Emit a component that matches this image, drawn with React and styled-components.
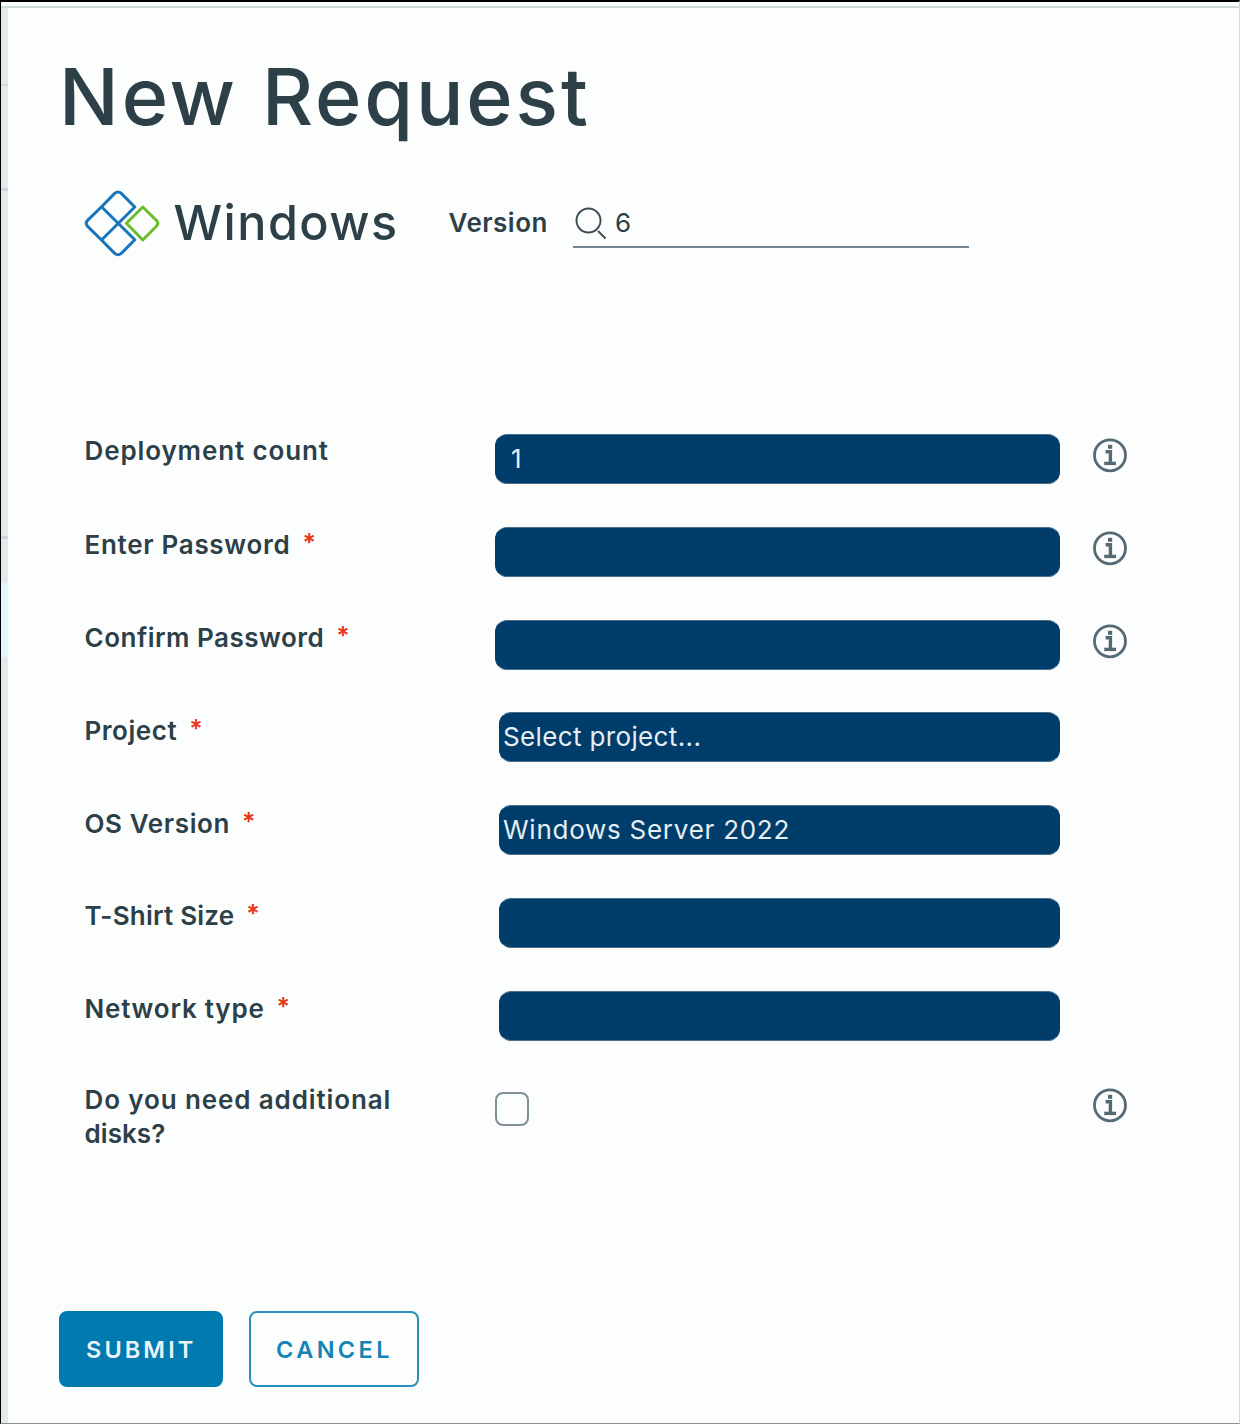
import React from "react";
import styled, { createGlobalStyle } from "styled-components";

const Global = createGlobalStyle`
  *, *::before, *::after { box-sizing: border-box; }
  body {
    margin: 0;
    background: #fcfefe;
    color: #2d4048;
    font-family: Inter, "Liberation Sans", sans-serif;
  }
`;

const Window = styled.div`
  display: flex;
  flex-direction: column;
  width: 1240px;
  height: 1424px;
  border: solid;
  border-width: 2px 1px 1px;
  border-color: #000 #d4d6d6 #8f9191 #000;
  overflow: hidden;
`;

const TopEdge = styled.div`
  flex: none;
  height: 6px;
  background: #fff;
  border-bottom: 2px solid #cfdade;
`;

const Body = styled.div`
  flex: 1;
  display: flex;
  min-height: 0;
`;

const Rail = styled.div`
  flex: none;
  width: 7px;
  display: flex;
  flex-direction: column;
  background: #e3e9ec;
`;

const RailItem = styled.div`
  flex: none;
  height: ${(p) => p.$height}px;
  background: ${(p) => (p.$active ? "#e0f5fd" : "transparent")};
  border-bottom: ${(p) => p.$line || 0}px solid #ccd5d9;
`;

const Panel = styled.main`
  flex: 1;
  padding: 46px 0 0 51px;
`;

const Title = styled.h1`
  margin: 0;
  height: 84px;
  font-size: 79px;
  font-weight: 500;
  line-height: 84px;
  letter-spacing: 2.88px;
`;

const Header = styled.header`
  display: flex;
  align-items: center;
  height: 68px;
  margin: 51px 0 0 25px;
`;

const Logo = styled.svg`
  flex: none;
  width: 76px;
  height: 68px;
  fill: none;
  stroke-width: 3;
  stroke-linejoin: round;
`;

const Product = styled.h2`
  margin: 0 0 0 13.5px;
  width: 275px;
  font-size: 48.5px;
  font-weight: 450;
  line-height: 56px;
  letter-spacing: 1.45px;
`;

const VersionLabel = styled.label`
  width: 124.5px;
  margin-top: -2px;
  font-size: 26px;
  font-weight: 600;
  letter-spacing: 0.49px;
`;

const SearchField = styled.div`
  display: flex;
  align-items: center;
  width: 396px;
  height: 50px;
  border-bottom: 2px solid #73868f;
  font-size: 26px;
`;

const SearchIcon = styled.svg`
  flex: none;
  width: 36px;
  height: 36px;
  margin: 2px 6px 0 0;
  fill: none;
  stroke: #3a4d55;
  stroke-width: 1.9;
`;

const Form = styled.form`
  display: flex;
  flex-direction: column;
  margin: 177px 0 0 25px;
`;

const Row = styled.div`
  display: grid;
  grid-template-columns: 411px 565px 68px;
  align-items: start;
  height: ${(p) => p.$height || 92.8}px;
`;

const Label = styled.label`
  margin-top: ${(p) => p.$top}px;
  padding-left: 0.5px;
  font-size: 26px;
  font-weight: 600;
  line-height: 34px;
  letter-spacing: ${(p) => p.$tracking}px;
  white-space: pre-line;
`;

const Narrow = styled.span`
  letter-spacing: 0.05px;
`;

const Required = styled.span`
  display: inline-block;
  margin: -1px 0 1px 12px;
  vertical-align: top;
  color: #e8371c;
  font-size: 25px;
  line-height: 32px;
  letter-spacing: 0;
`;

const Field = styled.div`
  height: 50px;
  margin-left: ${(p) => (p.$select ? 4 : 0)}px;
  padding-left: ${(p) => (p.$select ? 3 : 15)}px;
  border: 1px solid #48708c;
  border-left-color: #003d6a;
  border-right-color: #003d6a;
  border-radius: 12px;
  background: #003d6a;
  color: #e6eef3;
  font-size: 26px;
  line-height: 47px;
  letter-spacing: ${(p) => p.$tracking || 0}px;
`;

const Checkbox = styled.span`
  width: 34px;
  height: 34px;
  margin-top: 8px;
  border: 2px solid #7f9098;
  border-radius: 8px;
`;

const Info = styled.svg`
  width: 36px;
  height: 36px;
  margin: 3px 0 0 32px;
  fill: none;
  stroke: #566a73;
  stroke-width: 2.8;
`;

const Actions = styled.div`
  display: flex;
  gap: 26px;
  margin: 135px 0 0;
`;

const Button = styled.button`
  width: ${(p) => p.$width}px;
  height: 76px;
  padding: 1px 0 0 25px;
  border: 2px solid ${(p) => (p.$primary ? "#007aaf" : "#2a8fbb")};
  border-radius: 8px;
  background: ${(p) => (p.$primary ? "#007aaf" : "#fcfefe")};
  color: ${(p) => (p.$primary ? "#e9f4f8" : "#1583b4")};
  font: 600 23.5px Inter, "Liberation Sans", sans-serif;
  letter-spacing: ${(p) => p.$tracking}px;
  text-align: left;
`;

const rows = [
  { label: "Deployment count", tracking: 0.88, top: -0.5, value: "1", info: true },
  { label: "Enter Password", tracking: 0.7, required: true, info: true },
  { label: "Confirm Password", tracking: 0.5, required: true, info: true },
  { label: "Project", tracking: 0.55, required: true, select: true, value: "Select project...", valueTracking: 0.36 },
  { label: "OS Version", tracking: 0.62, required: true, select: true, value: "Windows Server 2022", valueTracking: 0.74 },
  { label: "T-Shirt Size", tracking: 0.22, required: true, select: true },
  { label: "Network type", tracking: 0.78, required: true, select: true },
];

function InfoIcon() {
  return (
    <Info viewBox="0 0 36 36">
      <circle cx="18" cy="18.3" r="15.5" />
      <path d="M13.6 14.8h4.8v11.4" strokeWidth="3.4" />
      <path d="M12.2 26.4h11.8" strokeWidth="3.4" />
      <path d="M16 9.8h4.2" strokeWidth="4" />
    </Info>
  );
}

export default function App() {
  return (
    <>
      <Global />
      <Window>
        <TopEdge />
        <Body>
          <Rail>
            <RailItem $height={78} $line={2} />
            <RailItem $height={105} $line={3} />
            <RailItem $height={348} $line={3} />
            <RailItem $height={43} />
            <RailItem $height={76} $active />
          </Rail>
          <Panel>
            <Title>New Request</Title>
            <Header>
              <Logo viewBox="0 0 76 68">
                <g stroke="#1a75bb">
                  <path d="M17.5 17.8 30.7 4.4Q34 1.5 37.3 4.4L50.8 18 17.5 51 3.6 37.4Q0.8 34.3 3.6 31.4Z" />
                  <path d="M17.5 17.8 50.8 50.8 37.3 64.4Q34 67.2 30.7 64.4L17.5 51" />
                </g>
                <path stroke="#6cbd2c" d="M58.8 18 72.6 31.6Q75 34.3 72.6 37L58.8 51 42.4 34.3Z" />
              </Logo>
              <Product>Windows</Product>
              <VersionLabel>Version</VersionLabel>
              <SearchField>
                <SearchIcon viewBox="0 0 36 36">
                  <circle cx="15.5" cy="15.5" r="12" />
                  <path d="M25 26 32.5 33.5" />
                </SearchIcon>
                6
              </SearchField>
            </Header>
            <Form>
              {rows.map((r) => (
                <Row key={r.label}>
                  <Label $top={r.top ?? 1.4} $tracking={r.tracking}>
                    {r.label}
                    {r.required && <Required>*</Required>}
                  </Label>
                  <Field $select={r.select} $tracking={r.valueTracking}>{r.value}</Field>
                  {r.info && <InfoIcon />}
                </Row>
              ))}
              <Row $height={92}>
                <Label $top={-0.5} $tracking={0.88}>
                  {"Do you need additional\n"}
                  <Narrow>disks?</Narrow>
                </Label>
                <Checkbox />
                <InfoIcon />
              </Row>
            </Form>
            <Actions>
              <Button $primary $width={164} $tracking={3.1}>SUBMIT</Button>
              <Button $width={170} $tracking={3.4}>CANCEL</Button>
            </Actions>
          </Panel>
        </Body>
      </Window>
    </>
  );
}
